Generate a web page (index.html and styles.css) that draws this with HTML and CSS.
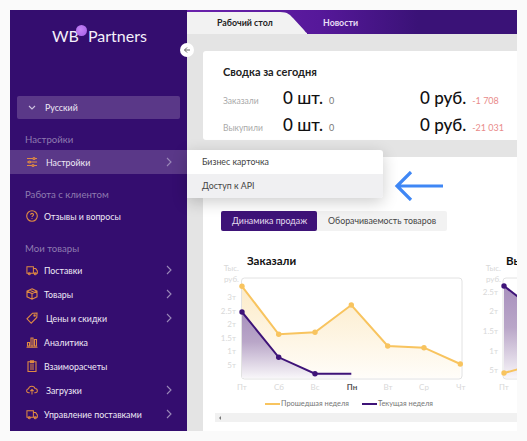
FILE: index.html
```html
<!DOCTYPE html>
<html lang="ru">

<head>
    <meta charset="UTF-8">
    <meta name="viewport" content="width=device-width, initial-scale=1.0">
    <title>WB Partners</title>
    <link rel="stylesheet" href="styles.css">
</head>

<body>
    <div class="app">
        <aside class="sidebar">
            <div class="logo"><span>WB</span><i class="logo-dot"></i><span>Partners</span></div>
            <div class="lang">
                <svg class="lang-chevron" viewBox="0 0 8 5"><path d="M1 1l3 3 3-3" /></svg>
                Русский
            </div>

            <div class="section">Настройки</div>
            <div class="row row-active row-wide">
                <svg class="icon" viewBox="0 0 12 12"><path d="M1 2.500h10M1 6h10M1 9.500h10" /><circle cx="8" cy="2.500" r="1" /><circle cx="3.500" cy="6" r="1" /><circle cx="7" cy="9.500" r="1" /></svg>
                Настройки
                <svg class="chevron" viewBox="0 0 6 10"><path d="M1 1l4 4-4 4" /></svg>
            </div>

            <div class="section">Работа с клиентом</div>
            <div class="row">
                <svg class="icon" viewBox="0 0 12 12"><circle cx="6" cy="6" r="5.300" /><path d="M4.600 4.800c0-2 2.900-1.900 2.900-.1 0 1.200-1.500 1.200-1.500 2.300M6 8.300v.7" /></svg>
                Отзывы и вопросы
            </div>

            <div class="section">Мои товары</div>
            <div class="row">
                <svg class="icon" viewBox="0 0 13 12"><path d="M1 2.500h7v7H1zM8 4.500h2.500L12.300 7v2.500H8z" /><circle cx="3.500" cy="10" r="1.100" /><circle cx="10" cy="10" r="1.100" /></svg>
                Поставки
                <svg class="chevron" viewBox="0 0 6 10"><path d="M1 1l4 4-4 4" /></svg>
            </div>
            <div class="row">
                <svg class="icon" viewBox="0 0 12 12"><path d="M6 .8l5 2.400v5.600L6 11.200 1 8.800V3.200zM1 3.200l5 2.400 5-2.400M6 5.600v5.600M3.500 2l5 2.400" /></svg>
                Товары
                <svg class="chevron" viewBox="0 0 6 10"><path d="M1 1l4 4-4 4" /></svg>
            </div>
            <div class="row row-wide">
                <svg class="icon" viewBox="0 0 12 12"><path d="M6.500 1.200L11 1l-.2 4.500-5.600 5.600L1 6.800z" /><circle cx="8.600" cy="3.400" r=".7" /></svg>
                Цены и скидки
                <svg class="chevron" viewBox="0 0 6 10"><path d="M1 1l4 4-4 4" /></svg>
            </div>
            <div class="row">
                <svg class="icon" viewBox="0 0 12 12"><path d="M1.500 6.500h2v3.500h-2zM5 2h2v8H5zM8.500 3.500h2V10h-2zM.5 11.300h11" /></svg>
                Аналитика
            </div>
            <div class="row">
                <svg class="icon" viewBox="0 0 12 12"><path d="M2 1.800h8v9.700H2zM4.500 .7h3v2h-3zM4 5h4M4 7h4M4 9h4" /></svg>
                Взаиморасчеты
            </div>
            <div class="row row-wide">
                <svg class="icon" viewBox="0 0 13 12"><path d="M4 9H3C-.2 9 .1 4.800 2.800 4.600 3.400 1 9 1 9.800 4.500 13 4.600 13.200 9 10 9H9M6.500 11V5.500M4.700 7.300l1.800-1.800 1.800 1.800" /></svg>
                Загрузки
                <svg class="chevron" viewBox="0 0 6 10"><path d="M1 1l4 4-4 4" /></svg>
            </div>
            <div class="row">
                <svg class="icon" viewBox="0 0 13 12"><path d="M1 2.500h7v7H1zM8 4.500h2.500L12.300 7v2.500H8z" /><circle cx="3.500" cy="10" r="1.100" /><circle cx="10" cy="10" r="1.100" /></svg>
                Управление поставками
                <svg class="chevron" viewBox="0 0 6 10"><path d="M1 1l4 4-4 4" /></svg>
            </div>
        </aside>

        <main class="main">
            <div class="tabs">
                <div class="tab tab-active">Рабочий стол</div>
                <div class="tab">Новости</div>
            </div>

            <section class="summary">
                <h2>Сводка за сегодня</h2>
                <div class="stat">
                    <span class="stat-name">Заказали</span>
                    <span class="stat-count"><b>0 шт.</b><small>0</small></span>
                    <span><b>0 руб.</b><small class="minus">-1 708</small></span>
                </div>
                <div class="stat">
                    <span class="stat-name">Выкупили</span>
                    <span class="stat-count"><b>0 шт.</b><small>0</small></span>
                    <span><b>0 руб.</b><small class="minus">-21 031</small></span>
                </div>
            </section>

            <section class="panel">
                <div class="switch">
                    <div class="switch-item switch-on">Динамика продаж</div>
                    <div class="switch-item">Оборачиваемость товаров</div>
                </div>

                <div class="charts">
                    <figure class="chart">
                        <h3>Заказали</h3>
                        <svg class="plot" width="250" height="133" viewBox="220 260 250 133">
                            <defs>
                                <linearGradient id="fillYellow" x1="0" y1="0" x2="0" y2="1">
                                    <stop offset="0" stop-color="#fcebc8" />
                                    <stop offset="1" stop-color="#fffdf9" />
                                </linearGradient>
                                <linearGradient id="fillPurple" x1="0" y1="0" x2="0" y2="1">
                                    <stop offset="0" stop-color="#a890bd" />
                                    <stop offset=".45" stop-color="#b9a6c8" />
                                    <stop offset="1" stop-color="#f8f6f9" />
                                </linearGradient>
                            </defs>
                            <rect class="plot-box" x="241.500" y="278" width="220.500" height="101" rx="3" />
                            <path fill="url(#fillYellow)" d="M242 286.300L278.700 334.300 315 332.300 351.300 305 387.700 346 424 347.700 460.300 364V378H242z" />
                            <path fill="url(#fillPurple)" d="M242 312L278.700 357.300 315 373.700 351.300 373.700V378H242z" />
                            <path class="line-yellow" d="M242 286.300L278.700 334.300 315 332.300 351.300 305 387.700 346 424 347.700 460.300 364" />
                            <path class="line-purple" d="M242 312L278.700 357.300 315 373.700 351.300 373.700" />
                            <g class="dots-yellow">
                                <circle cx="242" cy="286.300" r="2.700" /><circle cx="278.700" cy="334.300" r="2.700" /><circle cx="315" cy="332.300" r="2.700" /><circle cx="351.300" cy="305" r="2.700" /><circle cx="387.700" cy="346" r="2.700" /><circle cx="424" cy="347.700" r="2.700" /><circle cx="460.300" cy="364" r="2.700" />
                            </g>
                            <g class="dots-purple">
                                <circle cx="242" cy="312" r="2.700" /><circle cx="278.700" cy="357.300" r="2.700" /><circle cx="315" cy="373.700" r="2.700" />
                            </g>
                            <g class="axis-y">
                                <text x="239" y="271">Тыс.</text><text x="239" y="282">руб.</text>
                                <text x="236" y="300">3т</text><text x="236" y="314">2.5т</text><text x="236" y="327">2т</text><text x="236" y="341">1.5т</text><text x="236" y="354">1т</text><text x="236" y="368">5т</text>
                            </g>
                            <g class="axis-x">
                                <text x="242" y="390">Пт</text><text x="279" y="390">Сб</text><text x="315" y="390">Вс</text><text class="axis-now" x="352" y="390">Пн</text><text x="388" y="390">Вт</text><text x="424" y="390">Ср</text><text x="461" y="390">Чт</text>
                            </g>
                        </svg>
                        <div class="legend">
                            <span class="legend-item"><i class="legend-yellow"></i>Прошедшая неделя</span>
                            <span class="legend-item"><i class="legend-purple"></i>Текущая неделя</span>
                        </div>
                    </figure>

                    <figure class="chart">
                        <h3 class="chart-second">Выкупили</h3>
                        <svg class="plot" width="250" height="133" viewBox="480 260 250 133">
                            <rect class="plot-box" x="503" y="278" width="220" height="101" rx="3" />
                            <path fill="url(#fillPurple)" d="M504 286L530 306V378H504z" />
                            <path class="line-purple" d="M504 286L530 306" />
                            <path class="line-yellow" d="M504 373L530 366" />
                            <g class="dots-purple"><circle cx="504" cy="286" r="2.700" /></g>
                            <g class="dots-yellow"><circle cx="504" cy="373" r="2.700" /></g>
                            <g class="axis-y">
                                <text x="501" y="271">Тыс.</text><text x="501" y="282">руб.</text>
                                <text x="498" y="295">2.5т</text><text x="498" y="314">2т</text><text x="498" y="334">1.5т</text><text x="498" y="354">1т</text><text x="498" y="373">5т</text>
                            </g>
                            <g class="axis-x"><text x="504" y="390">Пт</text></g>
                        </svg>
                    </figure>
                </div>

                <div class="scrollbar"><span class="scroll-arrow"></span></div>
            </section>
        </main>

        <button class="collapse">
            <svg viewBox="0 0 8 8"><path d="M7 4H1.500M4 1.500L1.500 4 4 6.500" /></svg>
        </button>

        <div class="popup">
            <div class="popup-item">Бизнес карточка</div>
            <div class="popup-item popup-hover">Доступ к API</div>
        </div>

        <svg class="pointer" width="50" height="30" viewBox="0 0 50 30"><path d="M49 15H3M17 1L3 15l14 14" /></svg>
    </div>
</body>

</html>
```

FILE: styles.css
```css
* {
    box-sizing: border-box;
}

body {
    margin: 0;
    padding: 10px;
    height: 441px;
    overflow: hidden;
    background: #fafafa;
    font-family: Lato, "Open Sans", sans-serif;
}

.app {
    position: relative;
    display: flex;
    width: 507px;
    height: 421px;
    overflow: hidden;
}

/* sidebar */
.sidebar {
    width: 177px;
    flex-shrink: 0;
    background: #340d6f;
    color: #efeaf6;
    font-size: 8.800px;
}

.logo {
    position: relative;
    display: flex;
    gap: 9px;
    padding: 15px 0 0 42px;
    height: 86px;
    color: #f4f0fa;
    font-size: 16px;
    line-height: 22px;
}

.logo-dot {
    position: absolute;
    left: 66px;
    top: 15px;
    width: 11px;
    height: 11px;
    border-radius: 50%;
    background: radial-gradient(circle at 40% 40%, #c583f5, #a45ce6);
}

.lang {
    display: flex;
    align-items: center;
    gap: 9px;
    height: 23px;
    margin: 0 7px;
    padding-left: 11px;
    background: #5a3888;
    border-radius: 2px;
}

.lang-chevron {
    width: 8px;
    height: 5px;
    fill: none;
    stroke: #cfc4e0;
    stroke-width: 1.100;
}

.section {
    height: 30px;
    padding: 15px 0 0 15px;
    color: #8f7bb0;
    font-size: 9.600px;
    line-height: 12px;
}

.lang + .section {
    height: 31px;
}

.row {
    position: relative;
    display: flex;
    align-items: center;
    gap: 6px;
    height: 24px;
    padding-left: 16px;
}

.row-wide {
    gap: 8px;
}

.row-active {
    background: #5a3888;
}

.icon {
    width: 12px;
    height: 12px;
    flex-shrink: 0;
    fill: none;
    stroke: #e08a42;
    stroke-width: 1.100;
}

.row-active .icon circle {
    fill: #5a3888;
}

.chevron {
    position: absolute;
    left: 156px;
    top: 7px;
    width: 6px;
    height: 10px;
    fill: none;
    stroke: #9a88b8;
    stroke-width: 1.100;
}

/* main */
.main {
    flex: 1;
    min-width: 0;
    display: flex;
    flex-direction: column;
    background: #e4e4e4;
}

.tabs {
    display: flex;
    height: 24px;
    padding-top: 2px;
    background: linear-gradient(90deg, #6a22ac 0%, #56189a 40%, #3a1277 70%, #3a1277 100%);
    font-size: 8.800px;
    font-weight: 700;
    line-height: 22px;
}

.tab {
    color: #e8def5;
    padding-left: 16px;
}

.tab-active {
    width: 120px;
    padding-left: 30px;
    color: #222;
    background: #f2f2f2;
    clip-path: path("M0 0H93C101 0 103 3 106 6L117 18C119 21 121 22 124 22H0Z");
}

.summary {
    height: 89px;
    margin: 17px 0 0 16px;
    padding: 13px 0 0 20px;
    background: #fff;
    border-radius: 3px 0 0 3px;
}

.summary h2 {
    margin: 0 0 5px;
    color: #222;
    font-size: 11px;
    font-weight: 700;
    line-height: 15px;
}

.stat {
    display: flex;
    align-items: baseline;
    height: 27px;
    line-height: 27px;
}

.stat b {
    color: #111;
    font-size: 17px;
    font-weight: 500;
}

.stat small {
    margin-left: 6px;
    color: #777;
    font-size: 9px;
}

.stat small.minus {
    color: #e98a8a;
}

.stat-name {
    width: 60px;
    color: #aaa;
    font-size: 8.500px;
}

.stat-count {
    width: 137px;
}

.panel {
    flex: 1;
    min-height: 0;
    margin: 17px 0 0 16px;
    padding: 54px 0 0 12px;
    background: #fff;
    overflow: hidden;
}

.switch {
    display: flex;
    width: 226px;
    height: 20px;
    margin-left: 6px;
    background: #f2f2f2;
    border-radius: 2px;
    color: #444;
    font-size: 8.800px;
    line-height: 20px;
    white-space: nowrap;
}

.switch-item {
    padding: 0 11px;
}

.switch-on {
    width: 96px;
    background: #3e1378;
    border-radius: 2px;
    color: #e4dcef;
}

.charts {
    display: flex;
    gap: 10px;
    margin: 24px 0 0 5px;
}

.chart {
    width: 250px;
    flex-shrink: 0;
    margin: 0;
}

.chart h3 {
    height: 5px;
    margin: 0;
    padding-left: 27px;
    color: #111;
    font-size: 11.500px;
    font-weight: 700;
    line-height: 12px;
}

.chart h3.chart-second {
    padding-left: 26px;
    white-space: nowrap;
}

.plot {
    display: block;
}

.plot-box {
    fill: #fff;
    stroke: #e2e2e2;
    stroke-width: 1;
}

.line-yellow,
.line-purple {
    fill: none;
    stroke-width: 2;
}

.line-yellow {
    stroke: #f8c45f;
}

.line-purple {
    stroke: #3e1378;
}

.dots-yellow {
    fill: #f8c45f;
}

.dots-purple {
    fill: #3e1378;
}

.axis-y text,
.axis-x text {
    fill: #d8d8d8;
    font-size: 8px;
}

.axis-y text {
    text-anchor: end;
}

.axis-x text {
    text-anchor: middle;
}

.axis-x .axis-now {
    fill: #555;
    font-weight: 700;
}

.legend {
    display: flex;
    gap: 13px;
    height: 12px;
    margin-top: 5px;
    padding-left: 45px;
    color: #777;
    font-size: 7.400px;
    line-height: 12px;
}

.legend-item {
    display: flex;
    align-items: center;
    gap: 1px;
}

.legend-item i {
    width: 15px;
    height: 1.500px;
}

.legend-yellow {
    background: #f8c45f;
}

.legend-purple {
    background: #3e1378;
}

.scrollbar {
    display: flex;
    align-items: center;
    height: 9px;
    margin-top: 3px;
    padding-left: 4px;
    background: #f1f1f1;
}

.scroll-arrow {
    width: 0;
    height: 0;
    border: 2px solid transparent;
    border-right-color: #777;
    border-left-width: 0;
}

/* things over the page */
.collapse {
    position: absolute;
    left: 170px;
    top: 33px;
    width: 14px;
    height: 14px;
    padding: 3px;
    border: none;
    border-radius: 50%;
    background: #fff;
}

.collapse svg {
    display: block;
    fill: none;
    stroke: #666;
    stroke-width: 1;
}

.popup {
    position: absolute;
    left: 177px;
    top: 140px;
    width: 196px;
    background: #fff;
    border-radius: 0 3px 3px 0;
    box-shadow: 0 4px 16px rgba(0, 0, 0, 0.2);
    color: #444;
    font-size: 8.800px;
    line-height: 24px;
}

.popup-item {
    padding-left: 15px;
}

.popup-hover {
    background: #f0f0f2;
    border-radius: 0 0 3px 0;
}

.pointer {
    position: absolute;
    left: 384px;
    top: 161px;
    fill: none;
    stroke: #3f87f5;
    stroke-width: 3.200;
}
```
